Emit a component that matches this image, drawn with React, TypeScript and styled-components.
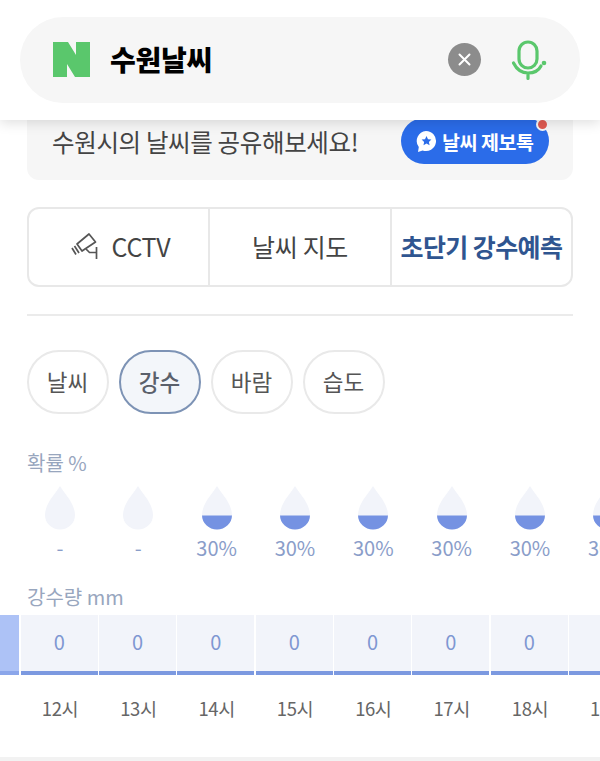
import React from "react";
import styled, { createGlobalStyle } from "styled-components";

const Global = createGlobalStyle`
  html, body { margin: 0; padding: 0; background: #fff; }
  body { font-family: "Noto Sans CJK KR", "Noto Sans", sans-serif; }
  * { box-sizing: border-box; }
`;
const Page = styled.div`
  width: 600px; height: 761px; overflow: hidden; background: #fff; display: flex; flex-direction: column;
`;
const Header = styled.header`
  position: relative; z-index: 2; height: 120px; flex: none; background: #fff; padding: 17px 20px 0;
  box-shadow: 0 3px 12px rgba(0,0,0,.13);
`;
const SearchPill = styled.div`
  height: 86px; border-radius: 43px; background: #f6f6f6; display: flex; align-items: center; padding: 0 33px;
`;
const Logo = styled.svg`
  flex: none; margin-top: -2px;
`;
const Query = styled.div`
  margin-left: 20px; flex: 1; font-size: 28px; font-weight: 800; color: #000; letter-spacing: -0.3px; line-height: 1; padding-bottom: 3px;
`;
const ClearBtn = styled.div`
  width: 33px; height: 33px; border-radius: 50%; background: #8c8c8c; display: flex; align-items: center; justify-content: center; margin-right: 30px; margin-top: -1px;
`;
const Banner = styled.div`
  margin: -10px 27px 0; height: 70px; flex: none; background: #f6f6f6; border-radius: 0 0 12px 12px;
  display: flex; align-items: flex-end; justify-content: space-between; padding: 0 24px 16px 25px;
`;
const BannerText = styled.div`
  font-size: 24.5px; color: #444; letter-spacing: -0.35px; line-height: 30px; margin-bottom: 7px; white-space: nowrap;
`;
const ReportBtn = styled.div`
  position: relative; width: 148px; height: 46px; flex: none; border-radius: 23px; background: #2b6ce9; color: #fff;
  display: flex; align-items: center; gap: 4px; padding-left: 13px; font-size: 19.5px; font-weight: 700; letter-spacing: -0.45px;
`;
const Dot = styled.span`
  position: absolute; right: 0; top: 0; width: 13px; height: 13px; border-radius: 50%; background: #e05a50; border: 2px solid #f6f6f6;
`;
const Segment = styled.div`
  margin: 27px 27px 0; height: 80px; flex: none; border: 2px solid #e8e8e8; border-radius: 12px; display: grid; grid-template-columns: 179px 182px 1fr;
`;
const SegItem = styled.div<{ $active?: boolean }>`
  display: flex; align-items: center; justify-content: center; gap: 11px; font-size: 25px; white-space: nowrap; padding-bottom: 2px;
  color: ${p => (p.$active ? "#2f5590" : "#444")}; font-weight: ${p => (p.$active ? 700 : 400)};
  letter-spacing: ${p => (p.$active ? "-0.6px" : "-0.3px")};
  & + & { border-left: 2px solid #e8e8e8; }
`;
const CamIcon = styled.svg`
  flex: none; margin-left: 4px;
`;
const Rule = styled.hr`
  margin: 27px 27px 0; height: 2px; border: 0; background: #ebebeb; flex: none;
`;
const Tabs = styled.div`
  margin: 34px 27px 0 26.500px; display: flex; gap: 10px; flex: none;
`;
const Tab = styled.div<{ $active?: boolean }>`
  width: 82px; height: 64px; border-radius: 32px; display: flex; align-items: center; justify-content: center; font-size: 22.5px; padding-bottom: 3px;
  color: ${p => (p.$active ? "#5a606b" : "#555")}; font-weight: ${p => (p.$active ? 500 : 400)};
  background: ${p => (p.$active ? "#f3f6fa" : "#fff")};
  border: 2px solid ${p => (p.$active ? "#7d93b5" : "#e9e9e9")};
`;
const Caption = styled.div`
  margin-left: 27px; font-size: 20px; line-height: 26px; color: #98a6be; flex: none;
`;
const ChanceCaption = styled(Caption)`margin-top: 36px;`;
const AmountCaption = styled(Caption)`margin-top: 23px;`;
const Cols = styled.div`
  display: grid; grid-template-columns: repeat(9, 78.33px); margin-left: -57.5px; flex: none;
`;
const ChanceCol = styled.div`
  display: flex; flex-direction: column; align-items: center; padding-top: 10px;
`;
const DropIcon = styled.svg`
  flex: none; display: block;
`;
const Pct = styled.div`
  font-size: 20px; line-height: 26px; margin-top: 5px; color: #8a9dc9; white-space: nowrap;
`;
const BarCols = styled(Cols)`margin-top: 5px;`;
const AmountCell = styled.div<{ $strong?: boolean }>`
  margin-right: 1.5px; height: 60px; background: ${p => (p.$strong ? "#adc2f6" : "#f2f4fa")};
  border-bottom: 4px solid ${p => (p.$strong ? "#8ba6ea" : "#7c99e0")};
  display: flex; align-items: center; justify-content: center; font-size: 20px; color: #7f97d2; padding-bottom: 3px;
`;
const Hour = styled.div`
  height: 66px; display: flex; align-items: center; justify-content: center; font-size: 18.5px; color: #666; letter-spacing: -0.4px; white-space: nowrap;
`;
const Footer = styled.div`
  margin-top: 16px; height: 5px; background: #f2f2f2; flex: none;
`;

const NLogo = () => (
  <Logo width="37" height="35" viewBox="0 0 37 35"><path fill="#5ac76c" d="M0 0h15l8 13V0h14v35H22l-8-13V35H0z" /></Logo>
);
const XIcon = () => (
  <svg width="13" height="13" viewBox="0 0 13 13"><path d="M1.500 1.500l10 10M11.500 1.500l-10 10" stroke="#fff" strokeWidth="2" strokeLinecap="round" /></svg>
);
const Mic = () => (
  <svg width="36" height="41" viewBox="0 0 36 41" fill="none" stroke="#5ac76c" strokeWidth="3.200" strokeLinecap="round">
    <rect x="8" y="2" width="18" height="26" rx="9" />
    <path d="M2.500 23c3 6 8.500 10 14.500 10s11-3 13-7M17 33v5.500" />
    <circle cx="33" cy="23" r="2.300" fill="#5ac76c" stroke="none" />
  </svg>
);
const Bubble = () => (
  <svg width="24" height="24" viewBox="0 0 24 24">
    <path fill="#fff" d="M12 2a10 10 0 1 1-3.400 19.400L4 23l.8-5A10 10 0 0 1 12 2z" />
    <path fill="#2b6ce9" d="M12.500 7l1.500 3.200 3.400.4-2.500 2.300.7 3.400-3.100-1.700-3 1.700.6-3.400L7.600 10.600l3.400-.4z" />
  </svg>
);
const Cam = () => (
  <CamIcon width="30" height="28" viewBox="0 0 30 28" fill="none" stroke="#555" strokeWidth="1.700" strokeLinejoin="round">
    <path d="M6 12L18 2l6.500 8L11 19z" />
    <path d="M3.500 14l4.500 7M1 16l4 6.500" />
    <path d="M15 17l3.500 3.500H25M25.500 15v12" />
  </CamIcon>
);
const Drop = ({ filled }: { filled: boolean }) => {
  const id = React.useId();
  const d = "M15 0C12 6 0 17 0 29a15 14.500 0 0 0 30 0C30 17 18 6 15 0z";
  return (
    <DropIcon width="30" height="44" viewBox="0 0 30 44">
      <clipPath id={id}><rect x="0" y="29.500" width="30" height="15" /></clipPath>
      <path d={d} fill="#f2f4fa" />
      {filled && <path d={d} fill="#7592e2" clipPath={`url(#${id})`} />}
    </DropIcon>
  );
};

const hours = ["11시", "12시", "13시", "14시", "15시", "16시", "17시", "18시", "19시"];
const chance = ["", "-", "-", "30%", "30%", "30%", "30%", "30%", "30%"];

export default function App() {
  return (
    <Page>
      <Global />
      <Header>
        <SearchPill>
          <NLogo />
          <Query>수원날씨</Query>
          <ClearBtn><XIcon /></ClearBtn>
          <Mic />
        </SearchPill>
      </Header>
      <Banner>
        <BannerText>수원시의 날씨를 공유해보세요!</BannerText>
        <ReportBtn><Bubble />날씨 제보톡<Dot /></ReportBtn>
      </Banner>
      <Segment>
        <SegItem><Cam />CCTV</SegItem>
        <SegItem>날씨 지도</SegItem>
        <SegItem $active>초단기 강수예측</SegItem>
      </Segment>
      <Rule />
      <Tabs>
        <Tab>날씨</Tab>
        <Tab $active>강수</Tab>
        <Tab>바람</Tab>
        <Tab>습도</Tab>
      </Tabs>
      <ChanceCaption>확률 %</ChanceCaption>
      <Cols>
        {chance.map((c, i) => (
          <ChanceCol key={i}>
            {i > 0 && <Drop filled={c !== "-"} />}
            <Pct>{c}</Pct>
          </ChanceCol>
        ))}
      </Cols>
      <AmountCaption>강수량 mm</AmountCaption>
      <BarCols>
        {hours.map((h, i) => (
          <AmountCell key={h} $strong={i === 0}>{i > 0 ? "0" : ""}</AmountCell>
        ))}
      </BarCols>
      <Cols>
        {hours.map(h => <Hour key={h}>{h}</Hour>)}
      </Cols>
      <Footer />
    </Page>
  );
}
